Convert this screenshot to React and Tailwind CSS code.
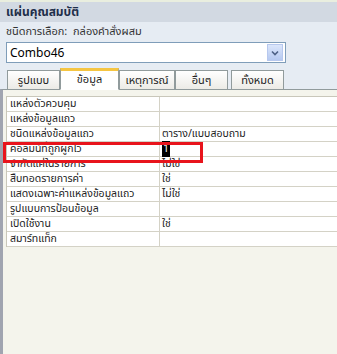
const rows = [
  ['แหล่งตัวควบคุม', ''],
  ['แหล่งข้อมูลแถว', ''],
  ['ชนิดแหล่งข้อมูลแถว', 'ตาราง/แบบสอบถาม'],
  ['คอลัมน์ที่ถูกผูกไว้', '1'],
  ['จำกัดแค่ในรายการ', 'ไม่ใช่'],
  ['สืบทอดรายการค่า', 'ใช่'],
  ['แสดงเฉพาะค่าแหล่งข้อมูลแถว', 'ไม่ใช่'],
  ['รูปแบบการป้อนข้อมูล', ''],
  ['เปิดใช้งาน', 'ใช่'],
  ['สมาร์ทแท็ก', ''],
];

function Tab({ label, active, className }) {
  if (active) {
    return (
      <div className={`h-[22px] -mb-px flex items-center justify-center pt-[1px] bg-white border border-[#919b9c] border-b-white border-t-[3px] border-t-[#f5c542] text-[11px] text-[#222] ${className}`}>
        {label}
      </div>
    );
  }
  return (
    <div className={`h-[19px] flex items-center justify-center pt-[2px] bg-gradient-to-b from-white to-[#ecebe6] border border-[#919b9c] border-b-0 text-[11px] text-[#222] ${className}`}>
      {label}
    </div>
  );
}

export default function App() {
  return (
    <div className="w-[337px] h-[354px] overflow-hidden bg-[#e6ecf3] flex flex-col" style={{ fontFamily: 'Tahoma, "Noto Sans Thai", "Noto Sans", sans-serif' }}>
      <div className="h-[2px] bg-[#e9eedf]" />
      <div className="h-[20px] bg-[#d2d9e2] flex items-center px-[6px] text-[12px] font-bold text-[#1e2f4a]">
        แผ่นคุณสมบัติ
      </div>
      <div className="h-[20px] flex items-center px-[6px] text-[11px] text-[#333]">
        ชนิดการเลือก:&nbsp;&nbsp;กล่องคำสั่งผสม
      </div>
      <div className="ml-[6px] w-[280px] h-[21px] bg-white border border-[#7f9db9] flex items-center">
        <span className="flex-1 pl-[3px] text-[12px] text-black">Combo46</span>
        <div className="w-[16px] h-[17px] mr-[2px] bg-gradient-to-b from-[#dbe6fb] to-[#b6c9f0] border border-[#b7c8ee] flex items-center justify-center">
          <svg width="8" height="6" viewBox="0 0 8 6">
            <path d="M1 1.5 L4 4.5 L7 1.5" fill="none" stroke="#4d6185" strokeWidth="1.6" />
          </svg>
        </div>
      </div>
      <div className="mt-[4px] h-[22px] flex items-end pl-[7px] relative z-10">
        <Tab label="รูปแบบ" className="w-[53px]" />
        <Tab label="ข้อมูล" active className="w-[59px]" />
        <Tab label="เหตุการณ์" className="w-[56px]" />
        <Tab label="อื่นๆ" className="w-[53px]" />
        <Tab label="ทั้งหมด" className="w-[53px] ml-[3px]" />
      </div>
      <div className="flex-1 bg-[#f4f4ec] border-t border-[#919b9c] border-l-[3px] border-l-[#a0a4b0] pl-[3px] pt-[6px] relative">
        <div className="bg-white border-l border-t border-[#c9c7ba]">
          {rows.map(([k, v], i) => (
            <div key={i} className="h-[15px] flex border-b border-[#d4d2c6] text-[10.5px] leading-[15px]">
              <div className="w-[153px] shrink-0 pl-[3px] text-[#222] border-r border-[#d4d2c6] whitespace-nowrap">{k}</div>
              <div className="flex-1 pl-[2px] text-[#222] whitespace-nowrap">
                {v === '1' ? <span className="bg-black text-white px-[1px]">1</span> : v}
              </div>
            </div>
          ))}
        </div>
        <div className="absolute left-0 top-[52px] w-[200px] h-[21px] border-[3px] border-[#e8141c]" />
      </div>
    </div>
  );
}
